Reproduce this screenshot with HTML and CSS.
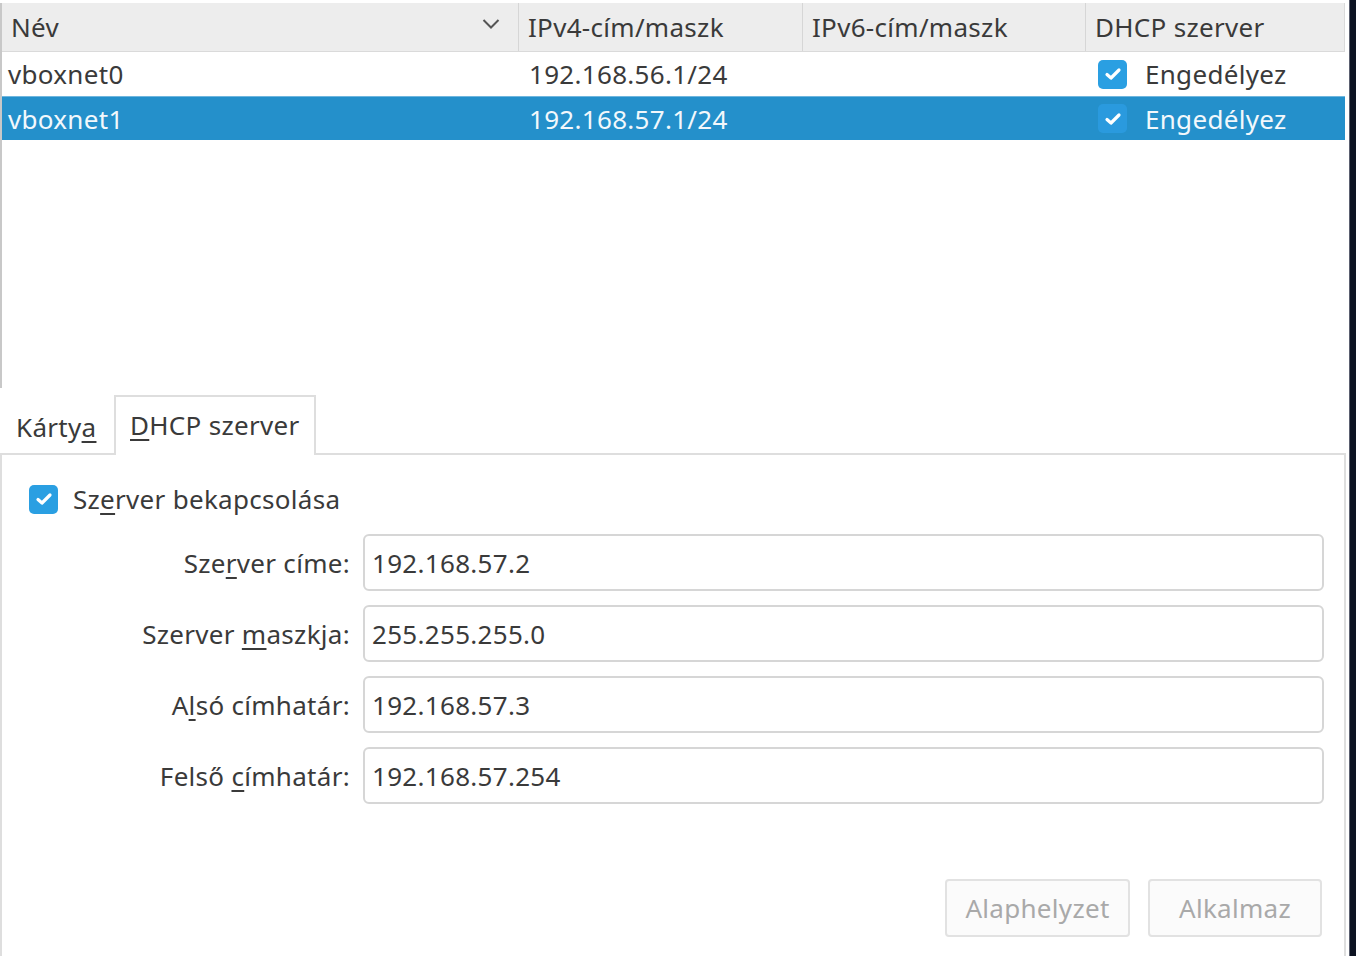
FILE: index.html
```html
<!DOCTYPE html>
<html lang="hu">
<head>
<meta charset="utf-8">
<title>Host-only hálózatok</title>
<link rel="stylesheet" href="styles.css">
</head>
<body>
<div class="window">
  <div class="main">
    <div class="table">
      <div class="thead">
        <div class="th col-name"><span>Név</span><svg class="chev" width="18" height="12" viewBox="0 0 18 12"><path d="M1.5 2 L9 9.5 L16.5 2" fill="none" stroke="#555" stroke-width="2"/></svg></div>
        <div class="th col-v4"><span>IPv4-cím/maszk</span></div>
        <div class="th col-v6"><span>IPv6-cím/maszk</span></div>
        <div class="th col-dhcp"><span>DHCP szerver</span></div>
      </div>
      <div class="tr">
        <div class="td col-name"><span>vboxnet0</span></div>
        <div class="td col-v4"><span>192.168.56.1/24</span></div>
        <div class="td col-v6"></div>
        <div class="td col-dhcp"><span class="cb"><svg width="18" height="14" viewBox="0 0 18 14"><path d="M3 7.5 L7 11 L15 3" fill="none" stroke="#fff" stroke-width="3.2" stroke-linecap="round" stroke-linejoin="round"/></svg></span><span>Engedélyez</span></div>
      </div>
      <div class="tr selected">
        <div class="td col-name"><span>vboxnet1</span></div>
        <div class="td col-v4"><span>192.168.57.1/24</span></div>
        <div class="td col-v6"></div>
        <div class="td col-dhcp"><span class="cb"><svg width="18" height="14" viewBox="0 0 18 14"><path d="M3 7.5 L7 11 L15 3" fill="none" stroke="#fff" stroke-width="3.2" stroke-linecap="round" stroke-linejoin="round"/></svg></span><span>Engedélyez</span></div>
      </div>
      <div class="tbody-empty"></div>
    </div>

    <div class="tabs">
      <div class="tab"><span>Kárty<u>a</u></span></div>
      <div class="tab active"><span><u>D</u>HCP szerver</span></div>
    </div>

    <div class="panel">
      <div class="enable"><span class="cb big"><svg width="18" height="14" viewBox="0 0 18 14"><path d="M3 7.5 L7 11 L15 3" fill="none" stroke="#fff" stroke-width="3.2" stroke-linecap="round" stroke-linejoin="round"/></svg></span><span>Sz<u>e</u>rver bekapcsolása</span></div>

      <div class="form">
        <div class="lbl"><span>Sze<u>r</u>ver címe:</span></div>
        <div class="input">192.168.57.2</div>
        <div class="lbl"><span>Szerver <u>m</u>aszkja:</span></div>
        <div class="input">255.255.255.0</div>
        <div class="lbl"><span>A<u>l</u>só címhatár:</span></div>
        <div class="input">192.168.57.3</div>
        <div class="lbl"><span>Felső <u>c</u>ímhatár:</span></div>
        <div class="input">192.168.57.254</div>
      </div>

      <div class="buttons">
        <div class="btn btn-reset">Alaphelyzet</div>
        <div class="btn btn-apply">Alkalmaz</div>
      </div>
    </div>
  </div>
  <div class="edge"></div>
</div>
</body>
</html>
```

FILE: styles.css
```css
html, body {
  margin: 0;
  padding: 0;
  background: #ffffff;
}
body {
  font-family: "Noto Sans", "Open Sans", "DejaVu Sans", sans-serif;
  font-size: 26px;
  letter-spacing: 0.3px;
  color: #3a3a3a;
  width: 1356px;
  height: 956px;
  overflow: hidden;
}
u {
  text-decoration-thickness: 2px;
  text-underline-offset: 4px;
}
.window {
  display: flex;
  height: 956px;
}
.main {
  width: 1349px;
  display: flex;
  flex-direction: column;
  background: #fff;
}
.edge {
  width: 6px;
  background: #0c1322;
  border-left: 1px solid #5b6070;
}

/* ---------- table ---------- */
.table {
  margin-top: 3px;
  width: 1343px;
  height: 385px;
  border-left: 2px solid #c8c8c8;
  display: flex;
  flex-direction: column;
  background: #fff;
}
.thead {
  display: flex;
  height: 48px;
  background: #ededed;
  border-bottom: 1px solid #dadada;
  border-right: 1px solid #dadada;
}
.th {
  display: flex;
  align-items: center;
  padding-left: 9px;
  box-sizing: border-box;
  border-right: 1px solid #d6d6d6;
  color: #3a3a3a;
  position: relative;
  white-space: nowrap;
}
.th:last-child { border-right: none; }
.chev {
  position: absolute;
  right: 18px;
  top: 15px;
}
.col-name { width: 517px; }
.col-v4 { width: 284px; }
.col-v6 { width: 283px; }
.col-dhcp { width: 258px; }
.tr {
  display: flex;
  height: 44px;
}
.td {
  display: flex;
  align-items: center;
  box-sizing: border-box;
  padding-left: 6px;
  white-space: nowrap;
}
.td.col-v4 { padding-left: 10px; }
.td.col-dhcp { padding-left: 12px; }
.tr.selected {
  background: #2490cb;
  color: #f2f8fc;
  border-top: 1px solid #6fb6de;
  height: 43px;
}
.cb {
  width: 29px;
  height: 29px;
  border-radius: 5px;
  background: #2a9fe2;
  display: inline-flex;
  align-items: center;
  justify-content: center;
  margin-right: 18px;
  flex: none;
}
.selected .cb { background: #2a9ade; }
.tbody-empty { flex: 1; }

/* ---------- tabs ---------- */
.tabs {
  display: flex;
  align-items: flex-end;
  height: 65px;
  box-sizing: border-box;
}
.tab {
  height: 52px;
  display: flex;
  align-items: center;
  padding: 0 0 0 16px;
  box-sizing: border-box;
  color: #3a3a3a;
  width: 114px;
  white-space: nowrap;
}
.tab.active {
  width: 202px;
  height: 60px;
  padding: 0 0 2px 14px;
  border: 2px solid #dedede;
  border-bottom: none;
  background: #fff;
  margin-bottom: -2px;
  position: relative;
}

/* ---------- panel ---------- */
.panel {
  flex: 1;
  border: 2px solid #dedede;
  border-bottom: none;
  width: 1346px;
  box-sizing: border-box;
  padding: 29px 20px 0 0;
  display: flex;
  flex-direction: column;
}
.enable {
  display: flex;
  align-items: center;
  margin-left: 27px;
  height: 30px;
  white-space: nowrap;
}
.enable .cb { margin-right: 15px; }
.form {
  margin-top: 20px;
  display: grid;
  grid-template-columns: 348px 1fr;
  column-gap: 13px;
  row-gap: 14px;
}
.lbl {
  display: flex;
  align-items: center;
  justify-content: flex-end;
  color: #3a3a3a;
  white-space: nowrap;
}
.input {
  height: 57px;
  box-sizing: border-box;
  border: 2px solid #d6d6d6;
  border-radius: 6px;
  display: flex;
  align-items: center;
  padding-left: 7px;
  color: #3a3a3a;
}
.buttons {
  margin-top: 75px;
  display: flex;
  justify-content: flex-end;
  gap: 18px;
  padding-right: 2px;
}
.btn {
  height: 58px;
  box-sizing: border-box;
  border: 2px solid #e2e2e2;
  border-radius: 4px;
  background: #fbfbfb;
  color: #a9a9a9;
  display: flex;
  align-items: center;
  justify-content: center;
}
.btn-reset { width: 185px; }
.btn-apply { width: 174px; }
```
